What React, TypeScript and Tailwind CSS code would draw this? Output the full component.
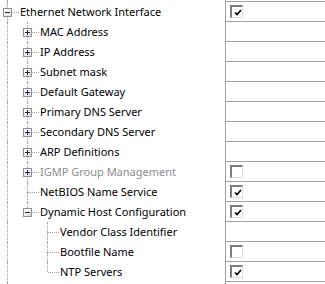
import React from "react";

type Row = {
  label: string;
  level: number;
  exp?: "plus" | "minus";
  check?: boolean;
  gray?: boolean;
  last?: boolean;
  guides: boolean[];
};

const rows: Row[] = [
  { label: "Ethernet Network Interface", level: 0, exp: "minus", check: true, guides: [] },
  { label: "MAC Address", level: 1, exp: "plus", guides: [true] },
  { label: "IP Address", level: 1, exp: "plus", guides: [true] },
  { label: "Subnet mask", level: 1, exp: "plus", guides: [true] },
  { label: "Default Gateway", level: 1, exp: "plus", guides: [true] },
  { label: "Primary DNS Server", level: 1, exp: "plus", guides: [true] },
  { label: "Secondary DNS Server", level: 1, exp: "plus", guides: [true] },
  { label: "ARP Definitions", level: 1, exp: "plus", guides: [true] },
  { label: "IGMP Group Management", level: 1, exp: "plus", check: false, gray: true, guides: [true] },
  { label: "NetBIOS Name Service", level: 1, check: true, guides: [true] },
  { label: "Dynamic Host Configuration", level: 1, exp: "minus", check: true, last: true, guides: [true] },
  { label: "Vendor Class Identifier", level: 2, guides: [true, false] },
  { label: "Bootfile Name", level: 2, check: false, guides: [true, false] },
  { label: "NTP Servers", level: 2, check: true, last: true, guides: [true, false] },
];

const dot = "absolute border-dotted border-[#a0a0a0]";

const Guide = ({ on }: { on: boolean }) => (
  <div className="relative w-[20px] h-full shrink-0">
    {on && <div className={`${dot} left-[7px] top-0 bottom-0 border-l`} />}
  </div>
);

const Expander = ({ kind }: { kind: "plus" | "minus" }) => (
  <div className="absolute left-[3px] top-[6px] w-[9px] h-[9px] border border-[#919191] bg-gradient-to-br from-white to-[#dcdcdc]">
    <div className="absolute left-[1px] top-[3px] w-[5px] h-[1px] bg-[#1e2b44]" />
    {kind === "plus" && <div className="absolute left-[3px] top-[1px] w-[1px] h-[5px] bg-[#1e2b44]" />}
  </div>
);

const Connector = ({ row }: { row: Row }) => (
  <div className="relative w-[20px] h-full shrink-0">
    <div className={`${dot} left-[7px] top-0 h-[10px] border-l`} />
    {!row.last && <div className={`${dot} left-[7px] top-[10px] bottom-0 border-l`} />}
    <div className={`${dot} left-[8px] top-[10px] w-[11px] border-t`} />
    {row.exp && <Expander kind={row.exp} />}
  </div>
);

const CheckBox = ({ checked }: { checked: boolean }) => (
  <div className="relative w-[13px] h-[13px] bg-white border-t-2 border-l-2 border-t-[#7c7c7c] border-l-[#7c7c7c] border-r border-b border-r-[#dedede] border-b-[#dedede]">
    {checked && (
      <svg className="absolute left-[2px] top-[2px]" width="8" height="7" viewBox="0 0 8 7">
        <path d="M1 3.5 L3 5.5 L7 1" fill="none" stroke="#000" strokeWidth="1.6" />
      </svg>
    )}
  </div>
);

export default function App() {
  return (
    <div
      className="w-[325px] h-[284px] bg-white flex flex-col overflow-hidden text-[11px] text-black"
      style={{ fontFamily: '"Noto Sans", "Open Sans", sans-serif' }}
    >
      <div className="flex h-[2px] shrink-0">
        <div className="w-[225px] shrink-0 flex">
          <Guide on />
        </div>
        <div className="flex-1 border-l border-b border-[#a0a0a0]" />
      </div>
      {rows.map((row) => (
        <div key={row.label} className="flex h-[20px] shrink-0">
          <div className="w-[225px] shrink-0 flex">
            {row.guides.map((g, i) => (
              <Guide key={i} on={g} />
            ))}
            <Connector row={row} />
            <span
              className={`whitespace-nowrap leading-[20px] ${row.gray ? "text-[#8d8d8d]" : "text-black"}`}
            >
              {row.label}
            </span>
          </div>
          <div className="flex-1 border-l border-b border-[#a0a0a0] pl-[4px] pt-[3px]">
            {row.check !== undefined && <CheckBox checked={row.check} />}
          </div>
        </div>
      ))}
      <div className="flex flex-1">
        <div className="w-[225px] shrink-0 flex">
          <Guide on />
        </div>
        <div className="flex-1 border-l border-[#a0a0a0]" />
      </div>
    </div>
  );
}
